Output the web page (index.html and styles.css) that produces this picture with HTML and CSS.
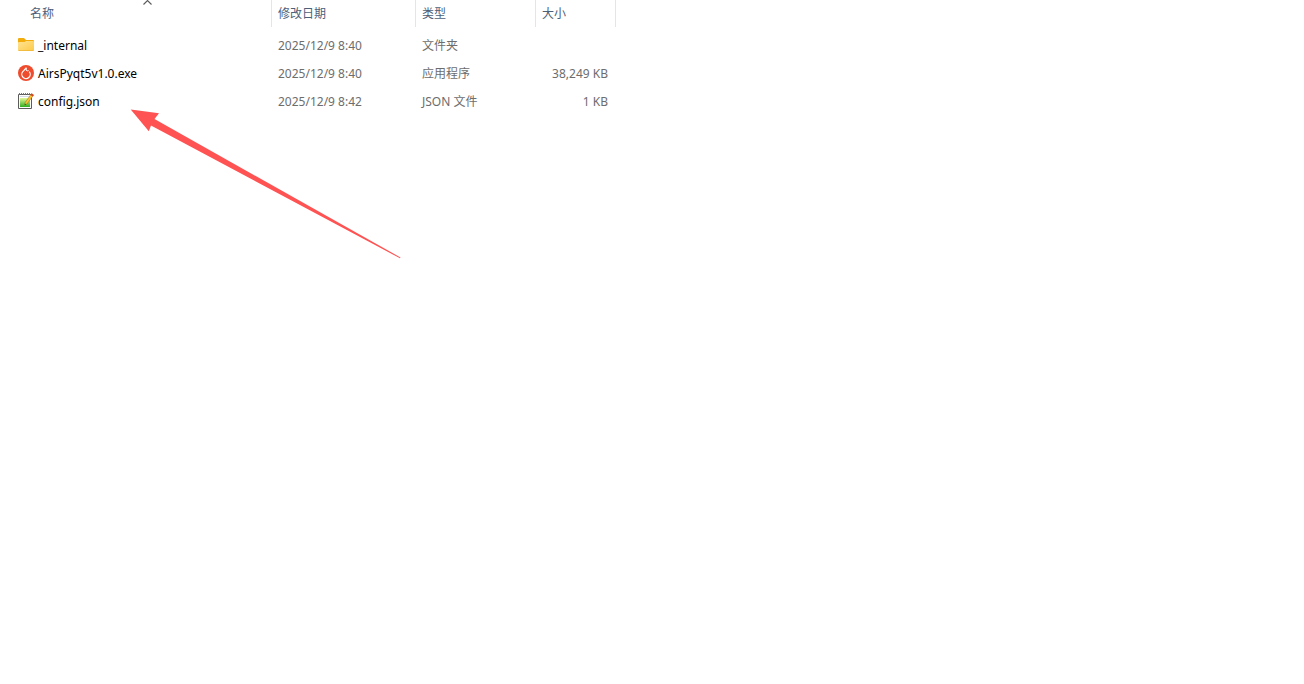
FILE: index.html
```html
<!DOCTYPE html>
<html lang="zh-CN">
<head>
    <meta charset="UTF-8">
    <meta name="viewport" content="width=device-width, initial-scale=1.0">
    <title>文件列表</title>
    <link rel="stylesheet" href="styles.css">
</head>
<body>
    <main class="explorer">
        <table class="file-list">
            <colgroup>
                <col class="col-name">
                <col class="col-date">
                <col class="col-type">
                <col class="col-size">
            </colgroup>
            <thead>
                <tr>
                    <th class="name" aria-sort="ascending">
                        <button type="button">名称</button>
                        <svg class="sort-arrow" width="9" height="5" viewBox="0 0 9 5" aria-hidden="true">
                            <path d="M.5 4.5l4-4 4 4" fill="none" stroke="#5a5a5a" stroke-width="1.1"/>
                        </svg>
                    </th>
                    <th><button type="button">修改日期</button></th>
                    <th><button type="button">类型</button></th>
                    <th><button type="button">大小</button></th>
                </tr>
            </thead>
            <tbody>
                <tr>
                    <td class="name">
                        <div class="file">
                            <svg class="icon" viewBox="0 0 16 16" aria-hidden="true">
                                <defs>
                                    <linearGradient id="folder" x1="0" y1="0" x2="1" y2="1">
                                        <stop offset="0" stop-color="#ffe393"/>
                                        <stop offset="1" stop-color="#fdca48"/>
                                    </linearGradient>
                                </defs>
                                <path d="M0 2q0-1 1-1h5l2 2h7q1 0 1 1v4H0z" fill="#f2ac0c"/>
                                <path d="M0 6q0-1 1-1h5.5l1.5-1h7q1 0 1 1v8q0 1-1 1H1q-1 0-1-1z" fill="url(#folder)"/>
                                <path d="M.5 13.5h15" stroke="#edb63a" stroke-width=".8"/>
                            </svg>
                            <span>_internal</span>
                        </div>
                    </td>
                    <td>2025/12/9 8:40</td>
                    <td>文件夹</td>
                    <td class="size"></td>
                </tr>
                <tr>
                    <td class="name">
                        <div class="file">
                            <svg class="icon" viewBox="0 0 16 16" aria-hidden="true">
                                <circle cx="8" cy="8" r="8" fill="#ee4c2c"/>
                                <path d="M8.2 3L5 6.4a4.2 4.2 0 1 0 6.2.2" fill="none" stroke="#fff" stroke-width="1.2"/>
                                <path d="M8.2 2.6v2.600l1.300 1" fill="none" stroke="#fff"/>
                                <circle cx="10" cy="5.6" r=".7" fill="#fff"/>
                            </svg>
                            <span>AirsPyqt5v1.0.exe</span>
                        </div>
                    </td>
                    <td>2025/12/9 8:40</td>
                    <td>应用程序</td>
                    <td class="size">38,249 KB</td>
                </tr>
                <tr>
                    <td class="name">
                        <div class="file">
                            <svg class="icon" viewBox="0 0 16 16" aria-hidden="true">
                                <defs>
                                    <linearGradient id="note" x1="0" y1="0" x2="0" y2="1">
                                        <stop offset="0" stop-color="#e6f79a"/>
                                        <stop offset="1" stop-color="#2fb020"/>
                                    </linearGradient>
                                </defs>
                                <path d="M.5 1.5h13v14H.5z" fill="#fff" stroke="#5c5c5c"/>
                                <path d="M1 .8h11.5" stroke="#777" stroke-width="1.6" stroke-dasharray="1 1"/>
                                <path d="M2 3.5h9" stroke="#b9c6d3" stroke-width=".6"/>
                                <path d="M2 5h10v9H2z" fill="url(#note)"/>
                                <path d="M13.5 .6l2.2 1.4-6.6 8.8-2.3 1.2 .4-2.5z" fill="#ffc22e" stroke="#7a4a10" stroke-width=".4"/>
                                <path d="M13.5 .6l2.2 1.4-1.1 1.5-2.2-1.5z" fill="#d93f27"/>
                                <path d="M6.800 12l.2-1.200.9.6z" fill="#222"/>
                            </svg>
                            <span>config.json</span>
                        </div>
                    </td>
                    <td>2025/12/9 8:42</td>
                    <td>JSON 文件</td>
                    <td class="size">1 KB</td>
                </tr>
            </tbody>
        </table>

        <!-- Red arrow pointing at config.json -->
        <svg class="pointer" width="272" height="150" viewBox="0 0 272 150" aria-hidden="true">
            <path d="M.7.6L29 4.2 24.5 10 270.5 148.5 270 149.3 21 16.5 18.8 22.3z" fill="#ff5252"/>
        </svg>
    </main>
</body>
</html>
```

FILE: styles.css
```css
body {
    margin: 0;
    background: #fff;
    color: #6d6d6d;
    font-family: "Noto Sans", "Noto Sans CJK SC", sans-serif;
    font-size: 12px;
    line-height: 16px;
}
.explorer {
    position: relative;
    min-height: 100vh;
}
.file-list {
    width: 616px;
    table-layout: fixed;
    border-collapse: separate;
    border-spacing: 0;
}
.col-name {
    width: 272px;
}
.col-date {
    width: 144px;
}
.col-type {
    width: 120px;
}
.col-size {
    width: 80px;
}
th {
    position: relative;
    height: 27px;
    padding: 0 6px;
    border-right: 1px solid #e5e5e5;
    text-align: left;
}
th.name {
    padding-left: 30px;
}
th button {
    display: block;
    width: 100%;
    padding: 0;
    border: none;
    background: none;
    color: #4c607a;
    font: inherit;
    font-weight: normal;
    text-align: left;
}
.sort-arrow {
    position: absolute;
    top: 0;
    left: 143px;
}
tbody::before {
    content: "";
    display: block;
    height: 4px;
}
td {
    box-sizing: border-box;
    height: 28px;
    padding: 2px 6px 0;
    white-space: nowrap;
}
td.name {
    padding-top: 0;
    padding-left: 18px;
    color: #000;
}
td.size {
    padding-right: 8px;
    text-align: right;
}
.file {
    display: flex;
    align-items: center;
    gap: 4px;
}
.file span {
    padding-top: 2px;
}
.icon {
    flex: none;
    width: 16px;
    height: 16px;
}
.pointer {
    position: absolute;
    top: 109px;
    left: 130px;
    pointer-events: none;
}
```
